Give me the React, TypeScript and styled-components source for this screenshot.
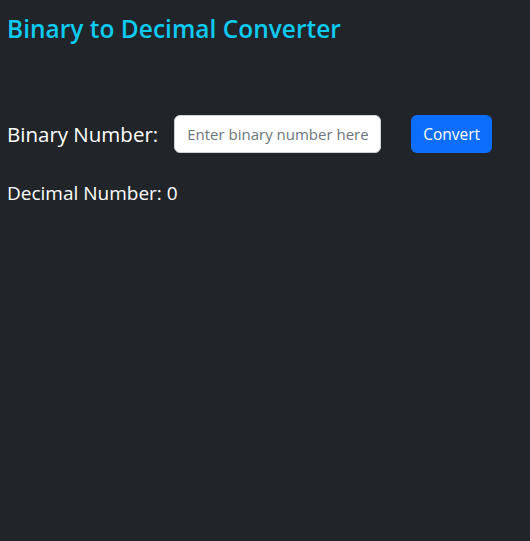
import styled, { createGlobalStyle } from "styled-components";

const GlobalStyle = createGlobalStyle`
  html, body {
    margin: 0;
    height: 100%;
    background-color: #212529;
  }
  body {
    font-family: "Open Sans", "Noto Sans", sans-serif;
    color: #ffffff;
  }
`;

const Page = styled.div`
  padding: 8px 7px;
`;

const Title = styled.h3`
  margin: 6px 0 0;
  font-size: 24.5px;
  font-weight: 600;
  line-height: 1.2;
  color: #0dcaf0;
`;

const Form = styled.div`
  display: flex;
  align-items: center;
  margin-top: 72px;
`;

const Label = styled.label`
  font-size: 20.5px;
  margin-right: 16px;
`;

const Input = styled.input`
  box-sizing: border-box;
  width: 207px;
  height: 38px;
  padding: 6px 12px;
  font-family: inherit;
  font-size: 15px;
  color: #212529;
  background: #fff;
  border: 1px solid #ced4da;
  border-radius: 6px;
  outline: none;
  &::placeholder {
    color: #6c757d;
  }
`;

const Button = styled.button`
  box-sizing: border-box;
  margin-left: 30px;
  width: 81px;
  height: 38px;
  padding: 0;
  font-family: inherit;
  font-size: 15.5px;
  color: #fff;
  background: #0d6efd;
  border: none;
  border-radius: 6px;
  cursor: pointer;
`;

const Result = styled.p`
  margin: 27px 0 0;
  font-size: 19px;
`;

const App = () => {
  return (
    <Page>
      <GlobalStyle />
      <Title>Binary to Decimal Converter</Title>
      <Form>
        <Label>Binary Number:</Label>
        <Input placeholder="Enter binary number here" />
        <Button>Convert</Button>
      </Form>
      <Result>Decimal Number: 0</Result>
    </Page>
  );
};

export default App;
